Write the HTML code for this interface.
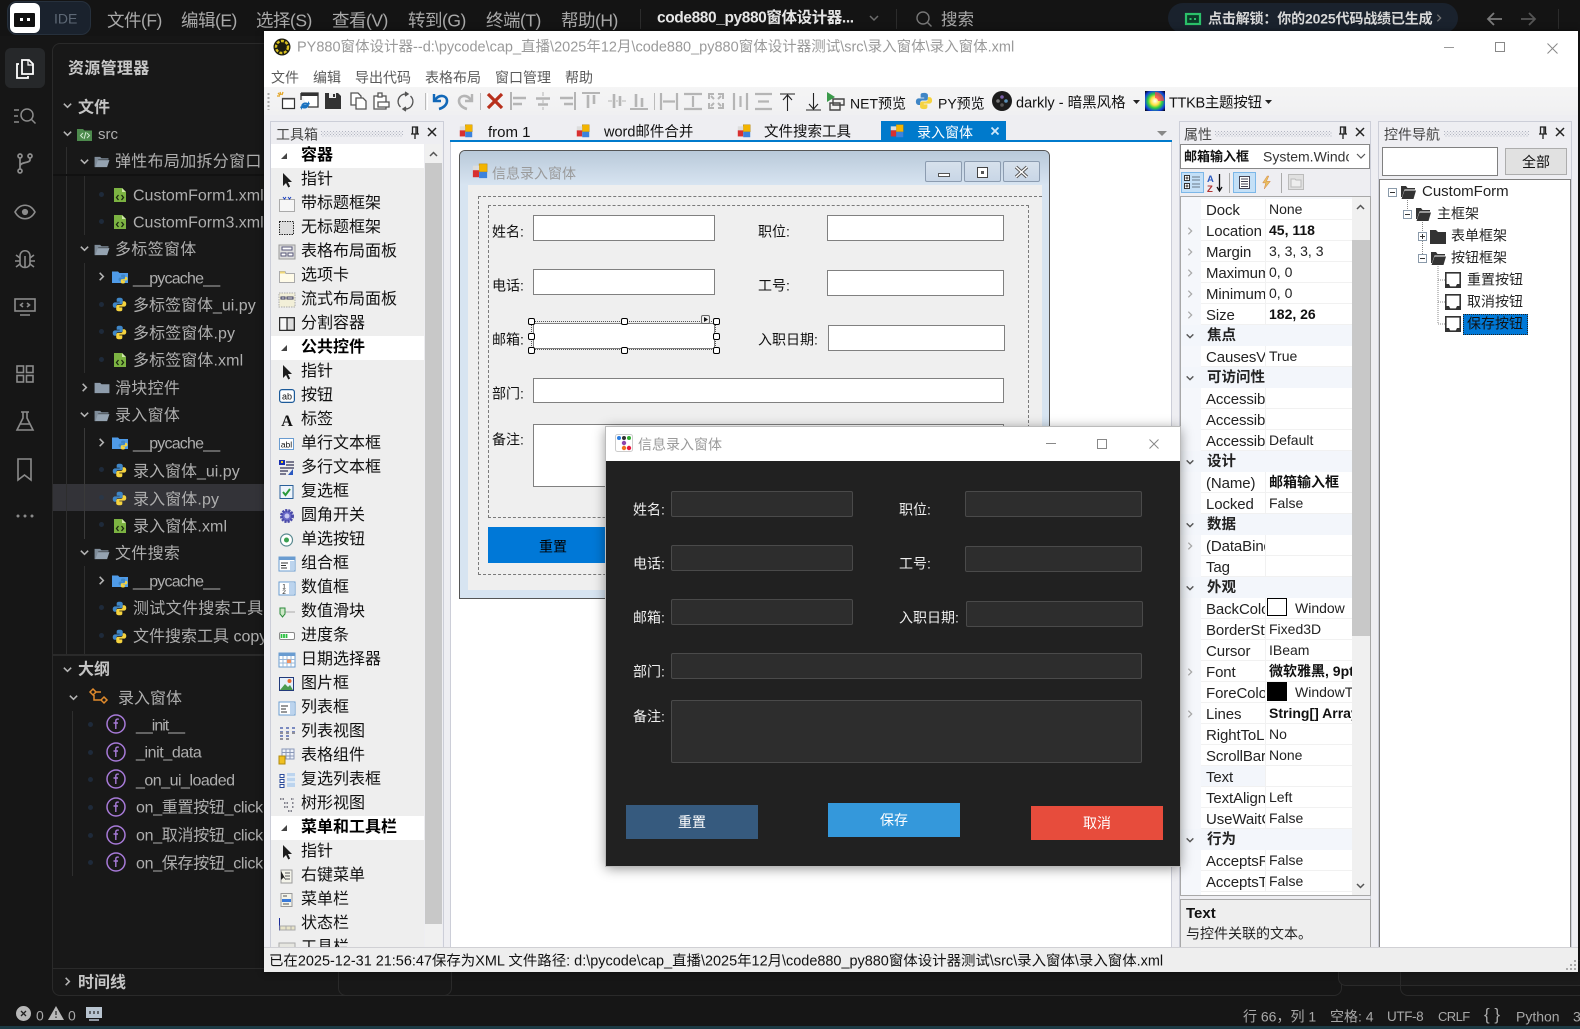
<!DOCTYPE html>
<html lang="zh"><head><meta charset="utf-8"><title>PY880窗体设计器</title>
<style>
html,body{margin:0;padding:0}
body{width:1580px;height:1029px;overflow:hidden;position:relative;background:#161616;font-family:"Liberation Sans","Noto Sans CJK SC",sans-serif}
.a{position:absolute}
.t{position:absolute;white-space:nowrap;line-height:1.2;transform:translateY(calc(-50% + 1px))}
svg{position:absolute;overflow:visible}
.m{font-size:17.500px;letter-spacing:-.5px;color:#a9a9a9;top:20px}
.f{font-size:16px;letter-spacing:.3px;color:#aeaeae}
.f.x{letter-spacing:0}
.f.y{letter-spacing:.1px}
.f.u{letter-spacing:-.8px}
.b{font-size:16px;font-weight:bold;color:#c4c4c4}
.mn{font-size:14px;color:#5a5a5a;top:77px}
.tbt{font-size:14.500px;color:#111;top:103px}
.tr{position:absolute;left:271px;width:153px;height:24px;background:#eee}
.tr.s{background:#fff}
.tr span{position:absolute;left:30px;top:0;line-height:23px;font-size:16px;color:#111;white-space:nowrap}
.tr.s span{font-weight:bold;color:#000}
.tr svg{left:8px;top:4px}
.tr.s svg{left:9px;top:8px}
.in{position:absolute;box-sizing:border-box;background:#fff;border:1px solid #808080}
.l{font-size:14px;color:#111;background:#efefef;padding-left:3px;margin-left:-3px}
.h{position:absolute;box-sizing:border-box;width:7px;height:7px;background:#fff;border:1px solid #000;border-radius:2px}
.r{position:absolute;left:1201px;width:151px;height:20px;background:#fff;border-bottom:1px solid #f1f1f1}
.r .n{position:absolute;left:5px;top:0;width:59px;overflow:hidden;font-size:15px;letter-spacing:-.1px;line-height:23px;color:#222;white-space:nowrap}
.r .v{position:absolute;left:64px;top:0;width:87px;height:21px;box-sizing:border-box;border-left:1px solid #f1f1f1;padding-left:3px;overflow:hidden;font-size:14px;line-height:20px;color:#222;white-space:nowrap}
.r .v.k{font-weight:bold;color:#111}
.sc{position:absolute;left:1181px;width:171px;height:21px;background:#f3f6fb;font-size:14.500px;font-weight:bold;line-height:23px;color:#222;text-indent:26px;overflow:hidden}
.ch{position:absolute;left:1185px;width:10px;height:10px}
.di{position:absolute;box-sizing:border-box;background:#2d2d2d;border:1px solid #4a4a4a;border-radius:2px}
.dl{font-size:14px;color:#eee}
.db{position:absolute;width:132px;height:34px;line-height:35px;text-align:center;color:#fff;font-size:14px}
.nt{font-size:15px;color:#222}
.st{font-size:14px;color:#a8a8a8;top:1016px}
</style></head><body>
<svg width="0" height="0" style="position:absolute"><defs>
<symbol id="py" viewBox="0 0 16 16"><path d="M8 .8C4.8.8 5 2.200 5 3v2h3.200v.7H3.300C1.800 5.700.8 6.900.8 8.600s1 2.900 2.300 2.900h1.500V9.600c0-1.100.9-2 2-2h3.100c1 0 1.800-.8 1.800-1.800V3C11.500 1.900 10.800.8 8 .8z" fill="#3f86c6"/><path d="M8 15.200c3.200 0 3-1.400 3-2.200v-2H7.800v-.7h4.900c1.500 0 2.500-1.200 2.500-2.900s-1-2.900-2.300-2.900h-1.500v1.900c0 1.100-.9 2-2 2H6.300c-1 0-1.800.8-1.800 1.800V13c0 1.100.7 2.200 3.500 2.200z" fill="#f5d33f"/></symbol>
<symbol id="xml" viewBox="0 0 12 16"><path d="M0 1h8l4 4v10H0z" fill="#7cb342"/><path d="M8 1v4h4z" fill="#cfe8a8"/><path d="M4.500 8L2.500 10.500 4.500 13M7.500 8l2 2.500-2 2.500" fill="none" stroke="#1c2a10" stroke-width="1.300"/></symbol>
<symbol id="fo" viewBox="0 0 16 14"><path d="M0 2h6l1.500 1.500H15V5H4L1.500 13H0z" fill="#7f8c99"/><path d="M3.500 5.500H16L13.500 13H1z" fill="#95a3b1"/></symbol>
<symbol id="fc" viewBox="0 0 16 14"><path d="M0 2h6l1.500 1.500H16V13H0z" fill="#8e9cab"/></symbol>
<symbol id="fb" viewBox="0 0 16 14"><path d="M0 1.500h6L7.500 3H16v10H0z" fill="#4f9be8"/><use href="#py" x="6" y="4" width="10" height="10"/></symbol>
<symbol id="cd" viewBox="0 0 12 12"><path d="M2 4l4 4 4-4" fill="none" stroke="#b4b4b4" stroke-width="1.700"/></symbol>
<symbol id="cr" viewBox="0 0 12 12"><path d="M4 2l4 4-4 4" fill="none" stroke="#b4b4b4" stroke-width="1.700"/></symbol>
<symbol id="ff" viewBox="0 0 20 20"><circle cx="10" cy="10" r="9" fill="none" stroke="#a77ad8" stroke-width="1.500"/><path d="M12.800 5.300c-1.500-.6-3-.1-3 1.700v8M7.500 9h4.500" fill="none" stroke="#a77ad8" stroke-width="1.400"/></symbol>
<symbol id="ptr" viewBox="0 0 16 16"><path d="M4 1v13l3-3 2.300 4.500 1.800-1-2.200-4.500H13z" fill="#1c1c1c"/></symbol>
<symbol id="tri" viewBox="0 0 8 8"><path d="M7 1v6H1z" fill="#444"/></symbol>
<symbol id="ic" viewBox="0 0 18 18"><rect x="1" y="8" width="7" height="8" fill="#d83030"/><rect x="8" y="1" width="9" height="9" fill="#f3b400" stroke="#b88a10" stroke-width=".6"/><rect x="8" y="10" width="9" height="7" fill="#3c82dc"/><rect x="1" y="3" width="7" height="5" fill="#ddd"/></symbol>
<symbol id="folder" viewBox="0 0 16 16"><path d="M1 2h5l1.500 2H15v1.500H4.500L2 13H1z" fill="#333"/><path d="M4.500 6.500H16L13.500 15H1.500z" fill="#333"/></symbol>
<symbol id="ctl" viewBox="0 0 16 16"><path d="M.8.800h14.400v14.400H.8z" fill="#fff" stroke="#333" stroke-width="1.600"/><path d="M1 12h3l1.500 3H1zM15 12h-3l-1.500 3H15z" fill="#333"/></symbol>
<symbol id="pin" viewBox="0 0 12 14"><path d="M3.500 1h5v7h-5zM2 8h8M6 8v5M7 1v7" fill="none" stroke="#222" stroke-width="1.300"/></symbol>
<symbol id="x" viewBox="0 0 10 10"><path d="M1 1l8 8M9 1l-8 8" stroke="#222" stroke-width="1.500"/></symbol>
<symbol id="exm" viewBox="0 0 9 9"><path d="M.5.500h8v8h-8z" fill="#fff" stroke="#8a9aaa"/><path d="M2 4.500h5" stroke="#333"/></symbol>
<symbol id="exp" viewBox="0 0 9 9"><path d="M.5.500h8v8h-8z" fill="#fff" stroke="#8a9aaa"/><path d="M2 4.500h5M4.500 2v5" stroke="#333"/></symbol>
<pattern id="dots" width="3" height="3" patternUnits="userSpaceOnUse"><rect width="1" height="1" fill="#b3b6c2"/><rect x="1.500" y="1.500" width="1" height="1" fill="#b3b6c2"/></pattern>
</defs></svg>

<!-- top bar -->
<div class="a" style="left:0;top:0;width:1580px;height:36px;background:#141414"></div>
<div class="a" style="left:7px;top:1px;width:84px;height:34px;box-sizing:border-box;background:#1a222d;border:1px solid #26303c;border-radius:10px"></div>
<div class="a" style="left:10px;top:3px;width:30px;height:30px;background:#fff;border-radius:6px"></div>
<div class="a" style="left:14px;top:13px;width:21px;height:14px;box-sizing:border-box;background:#111;border-radius:1px"></div>
<div class="a" style="left:20px;top:18px;width:3px;height:3px;background:#fff"></div><div class="a" style="left:27px;top:18px;width:3px;height:3px;background:#fff"></div>
<span class="t" style="left:54px;top:18px;font-size:14px;color:#5d6875">IDE</span>
<span class="t m" style="left:107px">文件(F)</span><span class="t m" style="left:181px">编辑(E)</span><span class="t m" style="left:256px">选择(S)</span><span class="t m" style="left:332px">查看(V)</span><span class="t m" style="left:408px">转到(G)</span><span class="t m" style="left:486px">终端(T)</span><span class="t m" style="left:561px">帮助(H)</span>
<div class="a" style="left:640px;top:9px;width:1px;height:20px;background:#2c2c2c"></div>
<span class="t" style="left:657px;top:18px;font-size:15.500px;letter-spacing:-.4px;font-weight:bold;color:#e6e6e6">code880_py880窗体设计器...</span>
<svg style="left:868px;top:12px" width="12" height="12" viewBox="0 0 12 12"><path d="M2 4l4 4 4-4" fill="none" stroke="#6c6c6c" stroke-width="1.500"/></svg>
<div class="a" style="left:896px;top:9px;width:1px;height:20px;background:#2c2c2c"></div>
<svg style="left:916px;top:11px" width="17" height="17" viewBox="0 0 17 17"><circle cx="7" cy="7" r="6" fill="none" stroke="#777" stroke-width="1.400"/><path d="M11.500 11.500l4 4" stroke="#777" stroke-width="1.400"/></svg>
<span class="t" style="left:941px;top:20px;font-size:16.500px;color:#a9a9a9">搜索</span>
<div class="a" style="left:1168px;top:3px;width:290px;height:30px;background:#1a222d;border-radius:15px"></div>
<svg style="left:1185px;top:13px" width="16" height="12"><rect x="1" y="1" width="14" height="10" fill="#0c3a28" stroke="#2bc06a" stroke-width="2.200"/><rect x="4.500" y="5" width="2" height="2" fill="#2bc06a"/><rect x="9" y="5" width="2" height="2" fill="#2bc06a"/></svg>
<span class="t" style="left:1208px;top:18px;font-size:14px;letter-spacing:-.15px;color:#d8d8d8;font-weight:bold">点击解锁：你的2025代码战绩已生成</span>
<svg style="left:1434px;top:13px" width="10" height="10" viewBox="0 0 12 12"><path d="M4 2l4 4-4 4" fill="none" stroke="#777" stroke-width="1.500"/></svg>
<svg style="left:1486px;top:11px" width="17" height="16" viewBox="0 0 17 16"><path d="M16 8H2M8 2L2 8l6 6" fill="none" stroke="#7b7b7b" stroke-width="1.800"/></svg>
<svg style="left:1520px;top:11px" width="17" height="16" viewBox="0 0 17 16"><path d="M1 8h14M9 2l6 6-6 6" fill="none" stroke="#555" stroke-width="1.800"/></svg>
<div class="a" style="left:1558px;top:9px;width:1px;height:20px;background:#2c2c2c"></div>

<!-- activity bar -->
<div class="a" style="left:5px;top:48px;width:40px;height:40px;background:#26282a;border-radius:6px"></div>
<svg style="left:15px;top:58px" width="20" height="22" viewBox="0 0 20 22" fill="none" stroke="#fff" stroke-width="1.800"><path d="M7 2h7l4 4v10H7z"/><path d="M4 6H2v14h11v-2"/><path d="M13 2v5h5" stroke-width="1.200"/></svg>
<svg style="left:14px;top:107px" width="23" height="18" viewBox="0 0 23 18" fill="none" stroke="#8b8b8b" stroke-width="1.500"><path d="M0 3h5M0 9h4M0 15h5"/><circle cx="13" cy="8" r="6"/><path d="M17.500 12.500l4 4"/></svg>
<svg style="left:17px;top:153px" width="16" height="21" viewBox="0 0 16 21" fill="none" stroke="#8b8b8b" stroke-width="1.700"><circle cx="3" cy="3" r="2"/><circle cx="13" cy="3" r="2"/><circle cx="3" cy="18" r="2"/><path d="M3 5v11M13 5v2c0 3-10 2-10 6"/></svg>
<svg style="left:14px;top:204px" width="22" height="16" viewBox="0 0 22 16" fill="none" stroke="#8b8b8b" stroke-width="1.600"><path d="M1 8c5-9 15-9 20 0-5 9-15 9-20 0z"/><circle cx="11" cy="8" r="2.300" fill="#8b8b8b"/></svg>
<svg style="left:15px;top:249px" width="20" height="20" viewBox="0 0 20 20" fill="none" stroke="#8b8b8b" stroke-width="1.600"><path d="M5 7c0-7 10-7 10 0v7c0 6-10 6-10 0z"/><path d="M10 7v12M1 6l4 3M19 6l-4 3M0 12h5M20 12h-5M1 18l4-3M19 18l-4-3"/></svg>
<svg style="left:14px;top:298px" width="22" height="18" viewBox="0 0 22 18" fill="none" stroke="#8b8b8b" stroke-width="1.600"><rect x="1" y="1" width="20" height="12"/><path d="M6 17h10M9 5L6.500 7 9 9M13 5l2.500 2L13 9"/></svg>
<svg style="left:16px;top:365px" width="18" height="18" viewBox="0 0 18 18" fill="none" stroke="#8b8b8b" stroke-width="1.600"><rect x="1" y="1" width="6.500" height="6.500"/><rect x="10.500" y="1" width="6.500" height="6.500"/><rect x="1" y="10.500" width="6.500" height="6.500"/><rect x="10.500" y="10.500" width="6.500" height="6.500"/></svg>
<svg style="left:16px;top:411px" width="18" height="20" viewBox="0 0 18 20" fill="none" stroke="#8b8b8b" stroke-width="1.600"><path d="M5 1h8M7 1v6L1 19h16L11 7V1M4 13h10"/></svg>
<svg style="left:17px;top:458px" width="15" height="23" viewBox="0 0 15 23" fill="none" stroke="#8b8b8b" stroke-width="1.600"><path d="M1 1h13v21l-6.500-5L1 22z"/></svg>
<svg style="left:16px;top:514px" width="18" height="4"><circle cx="2" cy="2" r="1.500" fill="#8b8b8b"/><circle cx="9" cy="2" r="1.500" fill="#8b8b8b"/><circle cx="16" cy="2" r="1.500" fill="#8b8b8b"/></svg>

<!-- side panel -->
<div class="a" style="left:52px;top:43px;width:400px;height:953px;box-sizing:border-box;background:#181818;border:1px solid #2a2a2a;border-radius:8px"></div>
<div class="a" style="left:53px;top:484px;width:212px;height:27px;background:#333338"></div>
<div class="a" style="left:66px;top:147px;width:1px;height:508px;background:#2e2e2e"></div>
<div class="a" style="left:84px;top:175px;width:1px;height:60px;background:#2e2e2e"></div>
<div class="a" style="left:84px;top:263px;width:1px;height:110px;background:#2e2e2e"></div>
<div class="a" style="left:84px;top:428px;width:1px;height:111px;background:#3a3a3a"></div>
<div class="a" style="left:84px;top:566px;width:1px;height:89px;background:#2e2e2e"></div>
<div class="a" style="left:53px;top:174px;width:212px;height:2px;background:#111"></div>
<span class="t" style="left:68px;top:68px;font-size:16px;font-weight:bold;letter-spacing:.3px;color:#c8c8c8">资源管理器</span>
<svg style="left:62px;top:100px" width="11" height="11"><use href="#cd" width="11" height="11"/></svg>
<span class="t b" style="left:78px;top:107px">文件</span>
<svg style="left:62px;top:128px" width="11" height="11"><use href="#cd" width="11" height="11"/></svg>
<svg style="left:77px;top:128px" width="16" height="14" viewBox="0 0 16 14"><path d="M0 1h6l1.500 1.500H15V13H0z" fill="#4d8a4d"/><path d="M6 5L3.500 7.500 6 10M10 5l2.500 2.500L10 10M9 4L7 11" fill="none" stroke="#cfe8cf" stroke-width="1"/></svg>
<span class="t" style="left:98px;top:134px;font-size:15px;color:#aeaeae">src</span>

<svg style="left:79px;top:156px" width="11" height="11"><use href="#cd" width="11" height="11"/></svg><svg style="left:94px;top:155px" width="16" height="13"><use href="#fo" width="16" height="13"/></svg><span class="t f" style="left:115px;top:161px">弹性布局加拆分窗口</span>
<div class="a" style="left:99px;top:192px;width:5px;height:5px;border-radius:3px;background:#1e2a3a"></div><svg style="left:114px;top:187px" width="12" height="16"><use href="#xml" width="12" height="16"/></svg><span class="t f x" style="left:133px;top:195px">CustomForm1.xml</span>
<div class="a" style="left:99px;top:219px;width:5px;height:5px;border-radius:3px;background:#1e2a3a"></div><svg style="left:114px;top:214px" width="12" height="16"><use href="#xml" width="12" height="16"/></svg><span class="t f x" style="left:133px;top:222px">CustomForm3.xml</span>
<svg style="left:79px;top:243px" width="11" height="11"><use href="#cd" width="11" height="11"/></svg><svg style="left:94px;top:243px" width="16" height="13"><use href="#fo" width="16" height="13"/></svg><span class="t f" style="left:115px;top:249px">多标签窗体</span>
<svg style="left:96px;top:271px" width="11" height="11"><use href="#cr" width="11" height="11"/></svg><svg style="left:112px;top:270px" width="16" height="14"><use href="#fb" width="16" height="14"/></svg><span class="t f u" style="left:133px;top:278px">__pycache__</span>
<div class="a" style="left:99px;top:302px;width:5px;height:5px;border-radius:3px;background:#1e2a3a"></div><svg style="left:112px;top:297px" width="15" height="15"><use href="#py" width="15" height="15"/></svg><span class="t f x" style="left:133px;top:305px">多标签窗体_ui.py</span>
<div class="a" style="left:99px;top:329px;width:5px;height:5px;border-radius:3px;background:#1e2a3a"></div><svg style="left:112px;top:325px" width="15" height="15"><use href="#py" width="15" height="15"/></svg><span class="t f y" style="left:133px;top:333px">多标签窗体.py</span>
<div class="a" style="left:99px;top:357px;width:5px;height:5px;border-radius:3px;background:#1e2a3a"></div><svg style="left:114px;top:352px" width="12" height="16"><use href="#xml" width="12" height="16"/></svg><span class="t f y" style="left:133px;top:360px">多标签窗体.xml</span>
<svg style="left:79px;top:382px" width="11" height="11"><use href="#cr" width="11" height="11"/></svg><svg style="left:94px;top:381px" width="16" height="13"><use href="#fc" width="16" height="13"/></svg><span class="t f" style="left:115px;top:388px">滑块控件</span>
<svg style="left:79px;top:409px" width="11" height="11"><use href="#cd" width="11" height="11"/></svg><svg style="left:94px;top:409px" width="16" height="13"><use href="#fo" width="16" height="13"/></svg><span class="t f" style="left:115px;top:415px">录入窗体</span>
<svg style="left:96px;top:437px" width="11" height="11"><use href="#cr" width="11" height="11"/></svg><svg style="left:112px;top:436px" width="16" height="14"><use href="#fb" width="16" height="14"/></svg><span class="t f u" style="left:133px;top:443px">__pycache__</span>
<div class="a" style="left:99px;top:467px;width:5px;height:5px;border-radius:3px;background:#1e2a3a"></div><svg style="left:112px;top:463px" width="15" height="15"><use href="#py" width="15" height="15"/></svg><span class="t f x" style="left:133px;top:471px">录入窗体_ui.py</span>
<div class="a" style="left:99px;top:495px;width:5px;height:5px;border-radius:3px;background:#2a3646"></div><svg style="left:112px;top:491px" width="15" height="15"><use href="#py" width="15" height="15"/></svg><span class="t f y" style="left:133px;top:499px">录入窗体.py</span>
<div class="a" style="left:99px;top:522px;width:5px;height:5px;border-radius:3px;background:#1e2a3a"></div><svg style="left:114px;top:518px" width="12" height="16"><use href="#xml" width="12" height="16"/></svg><span class="t f y" style="left:133px;top:526px">录入窗体.xml</span>
<svg style="left:79px;top:547px" width="11" height="11"><use href="#cd" width="11" height="11"/></svg><svg style="left:94px;top:547px" width="16" height="13"><use href="#fo" width="16" height="13"/></svg><span class="t f" style="left:115px;top:553px">文件搜索</span>
<svg style="left:96px;top:575px" width="11" height="11"><use href="#cr" width="11" height="11"/></svg><svg style="left:112px;top:574px" width="16" height="14"><use href="#fb" width="16" height="14"/></svg><span class="t f u" style="left:133px;top:581px">__pycache__</span>
<div class="a" style="left:99px;top:605px;width:5px;height:5px;border-radius:3px;background:#1e2a3a"></div><svg style="left:112px;top:601px" width="15" height="15"><use href="#py" width="15" height="15"/></svg><span class="t f" style="left:133px;top:608px">测试文件搜索工具</span>
<div class="a" style="left:99px;top:633px;width:5px;height:5px;border-radius:3px;background:#1e2a3a"></div><svg style="left:112px;top:629px" width="15" height="15"><use href="#py" width="15" height="15"/></svg><span class="t f x" style="left:133px;top:636px">文件搜索工具 copy</span>

<div class="a" style="left:53px;top:654px;width:212px;height:2px;background:#2a2a2a"></div>
<svg style="left:62px;top:664px" width="11" height="11"><use href="#cd" width="11" height="11"/></svg>
<span class="t b" style="left:78px;top:669px">大纲</span>
<svg style="left:68px;top:692px" width="11" height="11"><use href="#cd" width="11" height="11"/></svg>
<svg style="left:89px;top:688px" width="19" height="18" viewBox="0 0 19 18" fill="none" stroke="#e08a2c" stroke-width="1.500"><path d="M4 1l3 3-3 3-3-3zM7 4h5M5 7v5h8M15 9l3 3-3 3-3-3z"/></svg>
<span class="t" style="left:118px;top:698px;font-size:16px;color:#aeaeae">录入窗体</span>
<div class="a" style="left:72px;top:711px;width:1px;height:165px;background:#2e2e2e"></div>
<div class="a" style="left:88px;top:722px;width:5px;height:5px;border-radius:3px;background:#1e2a3a"></div><svg style="left:106px;top:714px" width="20" height="20"><use href="#ff" width="20" height="20"/></svg><span class="t f" style="left:136px;top:725px;letter-spacing:-1px">__init__</span>
<div class="a" style="left:88px;top:750px;width:5px;height:5px;border-radius:3px;background:#1e2a3a"></div><svg style="left:106px;top:742px" width="20" height="20"><use href="#ff" width="20" height="20"/></svg><span class="t f" style="left:136px;top:752px;letter-spacing:-.4px">_init_data</span>
<div class="a" style="left:88px;top:777px;width:5px;height:5px;border-radius:3px;background:#1e2a3a"></div><svg style="left:106px;top:769px" width="20" height="20"><use href="#ff" width="20" height="20"/></svg><span class="t f" style="left:136px;top:780px;letter-spacing:-.5px">_on_ui_loaded</span>
<div class="a" style="left:88px;top:805px;width:5px;height:5px;border-radius:3px;background:#1e2a3a"></div><svg style="left:106px;top:797px" width="20" height="20"><use href="#ff" width="20" height="20"/></svg><span class="t f" style="left:136px;top:807px;letter-spacing:-.3px">on_重置按钮_click</span>
<div class="a" style="left:88px;top:833px;width:5px;height:5px;border-radius:3px;background:#1e2a3a"></div><svg style="left:106px;top:825px" width="20" height="20"><use href="#ff" width="20" height="20"/></svg><span class="t f" style="left:136px;top:835px;letter-spacing:-.3px">on_取消按钮_click</span>
<div class="a" style="left:88px;top:860px;width:5px;height:5px;border-radius:3px;background:#1e2a3a"></div><svg style="left:106px;top:852px" width="20" height="20"><use href="#ff" width="20" height="20"/></svg><span class="t f" style="left:136px;top:863px;letter-spacing:-.3px">on_保存按钮_click</span>
<div class="a" style="left:53px;top:968px;width:212px;height:1px;background:#2a2a2a"></div>
<svg style="left:62px;top:976px" width="11" height="11"><use href="#cr" width="11" height="11"/></svg>
<span class="t b" style="left:78px;top:982px">时间线</span>

<!-- editor remnants below window -->
<div class="a" style="left:338px;top:960px;width:1004px;height:36px;box-sizing:border-box;border:1px solid #2a2a2a;border-radius:8px"></div>
<div class="a" style="left:1338px;top:960px;width:242px;height:26px;box-sizing:border-box;background:#1a1a1a;border:1px solid #2a2a2a;border-right:0;border-radius:0 0 0 8px"></div>
<div class="a" style="left:1400px;top:960px;width:180px;height:36px;box-sizing:border-box;border-bottom:1px solid #2a2a2a;border-left:1px solid #2a2a2a;border-radius:0 0 0 8px"></div>

<!-- status bar -->
<svg style="left:16px;top:1006px" width="15" height="15" viewBox="0 0 15 15"><circle cx="7.500" cy="7.500" r="7.500" fill="#b8b8b8"/><path d="M5 5l5 5M10 5l-5 5" stroke="#222" stroke-width="1.300"/></svg>
<span class="t" style="left:36px;top:1015px;font-size:14px;color:#a8a8a8">0</span>
<svg style="left:48px;top:1006px" width="16" height="14" viewBox="0 0 16 14"><path d="M8 0l8 14H0z" fill="#b8b8b8"/><path d="M8 5v4M8 10.500v1.500" stroke="#222" stroke-width="1.200"/></svg>
<span class="t" style="left:68px;top:1015px;font-size:14px;color:#a8a8a8">0</span>
<svg style="left:86px;top:1007px" width="16" height="14" viewBox="0 0 16 14"><rect width="16" height="11" fill="#b8c4d0"/><path d="M4 4v3M8 4v3M12 4v3" stroke="#222" stroke-width="1.200"/><path d="M3 13h10" stroke="#b8c4d0" stroke-width="1.500"/></svg>
<span class="t st" style="left:1243px">行 66，列 1</span>
<span class="t st" style="left:1330px">空格: 4</span>
<span class="t st" style="left:1387px;font-size:13.500px;letter-spacing:-.4px">UTF-8</span>
<span class="t st" style="left:1438px;font-size:13px;letter-spacing:-.6px">CRLF</span>
<span class="t" style="left:1484px;top:1014px;font-size:17px;color:#a8a8a8">{ }</span>
<span class="t st" style="left:1516px">Python</span>
<span class="t st" style="left:1573px">3</span>
<div class="a" style="left:0;top:1026px;width:1580px;height:3px;background:#1c3a44"></div>

<!-- MAIN WINDOW -->
<div class="a" style="left:264px;top:31px;width:1314px;height:941px;background:#eeeef2;box-shadow:0 0 6px rgba(0,0,0,.5)"></div>
<div class="a" style="left:264px;top:31px;width:1314px;height:56px;background:#fff"></div>
<svg style="left:273px;top:38px" width="18" height="18" viewBox="0 0 18 18"><circle cx="9" cy="9" r="8.500" fill="#1c1c10"/><circle cx="9" cy="9" r="6" fill="none" stroke="#d8c020" stroke-width="2.400" stroke-dasharray="3 1.500"/></svg>
<span class="t" style="left:297px;top:47px;font-size:14.500px;color:#9a9a9a">PY880窗体设计器--d:\pycode\cap_直播\2025年12月\code880_py880窗体设计器测试\src\录入窗体\录入窗体.xml</span>
<div class="a" style="left:1444px;top:47px;width:10px;height:1px;background:#999"></div>
<div class="a" style="left:1495px;top:42px;width:10px;height:10px;box-sizing:border-box;border:1px solid #888"></div>
<svg style="left:1547px;top:43px" width="11" height="11"><path d="M.5.500l10 10M10.500.500l-10 10" stroke="#888"/></svg>
<span class="t mn" style="left:271px">文件</span><span class="t mn" style="left:313px">编辑</span><span class="t mn" style="left:355px">导出代码</span><span class="t mn" style="left:425px">表格布局</span><span class="t mn" style="left:495px">窗口管理</span><span class="t mn" style="left:565px">帮助</span>

<!-- toolbar -->
<div class="a" style="left:264px;top:87px;width:1314px;height:28px;background:linear-gradient(#f5f5f5,#f0f0f2)"></div>
<svg style="left:267px;top:93px" width="3" height="17"><path d="M1.500 0v17" stroke="#aaa" stroke-width="2" stroke-dasharray="2 2"/></svg>
<svg style="left:277px;top:92px" width="18" height="17" viewBox="0 0 18 17"><path d="M5.500 6.500h12v10h-12z" fill="#fff" stroke="#333" stroke-width="1.200"/><path d="M5 6h13v1.500H5z" fill="#444"/><path d="M3 0l1 3M0 4h3M6 0L5 3M1 1l2 2" stroke="#e2a528" stroke-width="1.300"/></svg>
<svg style="left:300px;top:92px" width="19" height="18" viewBox="0 0 19 18"><path d="M1 1h17v14H8" fill="#fff" stroke="#333" stroke-width="1.300"/><path d="M1 1h17v3H1z" fill="#333"/><path d="M1 1v7" stroke="#333" stroke-width="1.300"/><path d="M1 14c1-4 5-4 7-3l0-2 2 3-3 2v-1c-2-1-4 0-6 1zM9 13c-1 4-5 4-7 3v2l-2-3 3-2" fill="#1a72c0"/></svg>
<svg style="left:325px;top:93px" width="16" height="16" viewBox="0 0 16 16"><path d="M0 0h13l3 3v13H0z" fill="#333"/><path d="M4 0h7v5H4z" fill="#eee"/><path d="M8 1h2v3H8z" fill="#333"/></svg>
<svg style="left:350px;top:92px" width="17" height="18" viewBox="0 0 17 18" fill="#fff" stroke="#555" stroke-width="1.300"><path d="M1 1h7l3 3v9H1z"/><path d="M6 6h7l3 3v8H6z"/></svg>
<svg style="left:373px;top:92px" width="17" height="18" viewBox="0 0 17 18" fill="#fff" stroke="#555" stroke-width="1.300"><path d="M1 4h12v13H1z"/><path d="M5 1h4v4H5z"/><path d="M5 10h11v5H5z"/></svg>
<svg style="left:396px;top:92px" width="19" height="19" viewBox="0 0 19 19" fill="none" stroke="#555" stroke-width="1.400"><path d="M9.500 2a7.500 7.500 0 0 0-5 13M9.500 17a7.500 7.500 0 0 0 5-13"/><path d="M9 0l3 2-3 2M10 15l-3 2 3 2" fill="#555"/></svg>
<div class="a" style="left:425px;top:93px;width:1px;height:17px;background:#bbb"></div><div class="a" style="left:427px;top:93px;width:1px;height:17px;background:#fff"></div>
<svg style="left:432px;top:92px" width="17" height="18" viewBox="0 0 17 18" fill="none"><path d="M2 2v7h7" stroke="#1268b8" stroke-width="2.400"/><path d="M3 8c4-6 12-5 12 1 0 4-4 7-8 8" stroke="#1268b8" stroke-width="2.600"/></svg>
<svg style="left:457px;top:92px" width="17" height="18" viewBox="0 0 17 18" fill="none"><path d="M15 2v7H8" stroke="#b5b5b5" stroke-width="2.400"/><path d="M14 8C10 2 2 3 2 9c0 4 4 7 8 8" stroke="#b5b5b5" stroke-width="2.600"/></svg>
<div class="a" style="left:480px;top:93px;width:1px;height:17px;background:#bbb"></div>
<svg style="left:487px;top:93px" width="16" height="16"><path d="M1 1l14 14M15 1L1 15" stroke="#b8301c" stroke-width="3.200"/></svg>
<svg style="left:510px;top:92px" width="18" height="18" fill="none" stroke="#b5b5b5" stroke-width="2"><path d="M1 0v18"/><path d="M3 6h13M3 12h9" stroke-width="2.600"/></svg>
<svg style="left:535px;top:92px" width="16" height="18" fill="none" stroke="#b5b5b5"><path d="M8 0v4M8 8v3M8 15v3"/><path d="M1 6.500h14M3 12.500h10" stroke-width="2.600"/></svg>
<svg style="left:558px;top:92px" width="18" height="18" fill="none" stroke="#b5b5b5" stroke-width="2"><path d="M17 0v18"/><path d="M2 6h13M6 12h9" stroke-width="2.600"/></svg>
<svg style="left:582px;top:92px" width="18" height="18" fill="none" stroke="#b5b5b5" stroke-width="2"><path d="M0 1h18"/><path d="M6 3v13M12 3v9" stroke-width="2.600"/></svg>
<svg style="left:608px;top:92px" width="18" height="18" fill="none" stroke="#b5b5b5"><path d="M0 9h4M8 9h2M14 9h4"/><path d="M6 2v14M12 4v10" stroke-width="2.600"/></svg>
<svg style="left:630px;top:92px" width="18" height="18" fill="none" stroke="#b5b5b5" stroke-width="2"><path d="M0 17h18"/><path d="M6 2v13M12 6v9" stroke-width="2.600"/></svg>
<div class="a" style="left:654px;top:93px;width:1px;height:17px;background:#bbb"></div>
<svg style="left:660px;top:93px" width="18" height="17" fill="none" stroke="#b5b5b5" stroke-width="2.200"><path d="M1 0v17M17 0v17M3 8.500h12"/></svg>
<svg style="left:684px;top:93px" width="18" height="17" fill="none" stroke="#b5b5b5" stroke-width="2.200"><path d="M0 1h18M0 16h18M9 3v11"/></svg>
<svg style="left:708px;top:93px" width="16" height="16" fill="none" stroke="#b5b5b5" stroke-width="2"><path d="M1 6V1h5M15 6V1h-5M1 10v5h5M15 10v5h-5M3 3l3 3M13 3l-3 3M3 13l3-3M13 13l-3-3"/></svg>
<svg style="left:733px;top:93px" width="15" height="17" fill="none" stroke="#b5b5b5" stroke-width="2.200"><path d="M1 0v17M14 0v17M7.500 3v11"/></svg>
<svg style="left:755px;top:93px" width="17" height="17" fill="none" stroke="#b5b5b5" stroke-width="2.200"><path d="M0 1h17M3 8.500h11M0 16h17"/></svg>
<svg style="left:780px;top:93px" width="15" height="18" fill="none" stroke="#222" stroke-width="1.100"><path d="M0 1h15M7.500 2v16M3 7l4.500-5L12 7"/></svg>
<svg style="left:806px;top:93px" width="15" height="18" fill="none" stroke="#222" stroke-width="1.100"><path d="M0 17h15M7.500 0v16M3 11l4.500 5 4.500-5"/></svg>
<svg style="left:827px;top:92px" width="18" height="19" viewBox="0 0 18 19"><path d="M0 0l8 5-8 5z" fill="#3a9a4a"/><path d="M6 7h11v6H6zM3 11h10v7H3z" fill="#f0f0f0" stroke="#444" stroke-width="1.400"/></svg>
<span class="t tbt" style="left:850px;font-size:14px">NET预览</span>
<svg style="left:915px;top:92px" width="18" height="18"><use href="#py" width="18" height="18"/></svg>
<span class="t tbt" style="left:938px;font-size:14px">PY预览</span>
<svg style="left:992px;top:91px" width="20" height="20" viewBox="0 0 20 20"><circle cx="10" cy="10" r="10" fill="#1c1c1c"/><circle cx="10" cy="6" r="1.800" fill="#7a5ea8"/><circle cx="6" cy="10" r="1.800" fill="#777"/><circle cx="14" cy="10" r="1.800" fill="#5a90b8"/><circle cx="10" cy="14" r="1.800" fill="#555"/></svg>
<span class="t tbt" style="left:1016px">darkly - 暗黑风格</span>
<svg style="left:1133px;top:100px" width="7" height="4"><path d="M0 0h7L3.500 4z" fill="#222"/></svg>
<svg style="left:1145px;top:91px" width="20" height="20"><defs><radialGradient id="rb" cx=".5" cy=".5" r=".7"><stop offset="0" stop-color="#fff"/><stop offset=".3" stop-color="#ffe040"/><stop offset=".5" stop-color="#30d040"/><stop offset=".75" stop-color="#1040e0"/><stop offset="1" stop-color="#000"/></radialGradient></defs><rect width="20" height="20" fill="url(#rb)"/><path d="M10 1a9 9 0 0 1 9 9h-6a3 3 0 0 0-3-3z" fill="#ff3060" opacity=".7"/></svg>
<span class="t tbt" style="left:1169px;letter-spacing:-.3px">TTKB主题按钮</span>
<svg style="left:1265px;top:100px" width="7" height="4"><path d="M0 0h7L3.500 4z" fill="#222"/></svg>

<!-- toolbox -->
<div class="a" style="left:270px;top:121px;width:174px;height:826px;box-sizing:border-box;background:#eeeef2;border:1px solid #ccced8;border-bottom:0"></div>
<span class="t" style="left:276px;top:134px;font-size:14px;color:#444">工具箱</span>
<svg style="left:321px;top:131px" width="82" height="6"><rect width="82" height="6" fill="url(#dots)"/></svg>
<svg style="left:409px;top:126px" width="12" height="14"><use href="#pin" width="12" height="14"/></svg>
<svg style="left:427px;top:127px" width="10" height="10"><use href="#x" width="10" height="10"/></svg>
<div class="a" style="left:425px;top:144px;width:17px;height:803px;background:#f0f0f0"></div>
<div class="a" style="left:425px;top:163px;width:17px;height:761px;background:#c8c8c8"></div>
<svg style="left:429px;top:151px" width="9" height="6"><path d="M1 5l3.500-3.500L8 5" fill="none" stroke="#555" stroke-width="1.500"/></svg>

<div class="tr s" style="top:144px"><svg width="8" height="8"><use href="#tri" width="8" height="8"/></svg><span>容器</span></div>
<div class="tr" style="top:168px"><svg width="16" height="16"><use href="#ptr" width="16" height="16"/></svg><span>指针</span></div>
<div class="tr" style="top:192px"><svg width="16" height="16" viewBox="0 0 16 16"><path d="M.5 3.500h15v12H.5z" fill="#f6f6f6" stroke="#aaa"/><path d="M4 1l1.500 2L7 1M9 1l1.500 2L12 1" fill="none" stroke="#1a3fc0"/></svg><span>带标题框架</span></div>
<div class="tr" style="top:216px"><svg width="16" height="16" viewBox="0 0 16 16"><rect x=".5" y="1.500" width="14" height="13" fill="#ddd" stroke="#222" stroke-dasharray="1.500 1"/></svg><span>无标题框架</span></div>
<div class="tr" style="top:240px"><svg width="16" height="16" viewBox="0 0 16 16"><rect y="1" width="16" height="14" fill="#ddd" stroke="#999"/><rect x="3" y="3" width="10" height="3" fill="#fff" stroke="#557"/><rect x="2" y="9" width="5" height="3" fill="#fff" stroke="#557"/><rect x="9" y="9" width="5" height="3" fill="#fff" stroke="#557"/></svg><span>表格布局面板</span></div>
<div class="tr" style="top:264px"><svg width="16" height="16" viewBox="0 0 16 16"><path d="M.5 3.500v11h15v-9H7L6 3.500z" fill="#fffbe8" stroke="#aaa"/><path d="M1 3.500h5v2H1z" fill="#f0d878"/></svg><span>选项卡</span></div>
<div class="tr" style="top:288px"><svg width="16" height="16" viewBox="0 0 16 16"><rect y="1" width="16" height="14" fill="#f2efd8" stroke="#aaa" stroke-dasharray="1.500 1"/><path d="M2 5h4v2H2zM8 5h6v2H8z" fill="#fff" stroke="#335"/></svg><span>流式布局面板</span></div>
<div class="tr" style="top:312px"><svg width="16" height="16" viewBox="0 0 16 16"><rect x=".7" y="1.700" width="14.600" height="12.600" fill="#ddd" stroke="#222" stroke-width="1.300"/><path d="M8 2v12" stroke="#222" stroke-width="1.300"/><rect x="1.300" y="2.300" width="6" height="11.400" fill="#f6f6f6"/></svg><span>分割容器</span></div>
<div class="tr s" style="top:336px"><svg width="8" height="8"><use href="#tri" width="8" height="8"/></svg><span>公共控件</span></div>
<div class="tr" style="top:360px"><svg width="16" height="16"><use href="#ptr" width="16" height="16"/></svg><span>指针</span></div>
<div class="tr" style="top:384px"><svg width="16" height="16" viewBox="0 0 16 16"><rect x=".6" y="1.600" width="14.800" height="12.800" rx="2.500" fill="#fff" stroke="#1c5a99" stroke-width="1.200"/><text x="8" y="11.500" text-anchor="middle" font-size="9" font-family="Liberation Sans" fill="#111">ab</text></svg><span>按钮</span></div>
<div class="tr" style="top:408px"><svg width="16" height="16" viewBox="0 0 16 16"><text x="8" y="14" text-anchor="middle" font-size="16" font-weight="bold" font-family="Liberation Serif" fill="#111">A</text></svg><span>标签</span></div>
<div class="tr" style="top:432px"><svg width="16" height="16" viewBox="0 0 16 16"><rect x=".5" y="2.500" width="14" height="11" fill="#fff" stroke="#6a9cd0"/><text x="7.500" y="11.500" text-anchor="middle" font-size="8.500" font-family="Liberation Sans" fill="#111">abl</text></svg><span>单行文本框</span></div>
<div class="tr" style="top:456px"><svg width="16" height="16" viewBox="0 0 16 16"><rect width="6" height="5" fill="#1a2fb0"/><rect x="2" y="1" width="2" height="2" fill="#f0d020"/><path d="M7 2h8M7 5h8M1 8h14M1 11h8M1 14h6" stroke="#335" stroke-width="1.200"/><path d="M9 15l5-6v6z" fill="#2a58c0"/></svg><span>多行文本框</span></div>
<div class="tr" style="top:480px"><svg width="16" height="16" viewBox="0 0 16 16"><rect x="1" y="1.500" width="13" height="13" fill="#eef4fb" stroke="#2a6099"/><path d="M4 8l2.500 3L11 5" fill="none" stroke="#2a9a3a" stroke-width="2"/></svg><span>复选框</span></div>
<div class="tr" style="top:504px"><svg width="16" height="16" viewBox="0 0 16 16"><circle cx="8" cy="8" r="5.500" fill="#6a6ac8" stroke="#4a4aa8" stroke-width="3" stroke-dasharray="2 1"/><circle cx="8" cy="8" r="2.500" fill="#c8c8f0"/></svg><span>圆角开关</span></div>
<div class="tr" style="top:528px"><svg width="16" height="16" viewBox="0 0 16 16"><circle cx="7.500" cy="8" r="6" fill="#fff" stroke="#5a8a90" stroke-width="1.200"/><circle cx="7.500" cy="8" r="2.500" fill="#3aa050"/></svg><span>单选按钮</span></div>
<div class="tr" style="top:552px"><svg width="16" height="16" viewBox="0 0 16 16"><rect y="1" width="16" height="14" fill="#fff" stroke="#6a9cd0"/><path d="M0 1h16v3H0z" fill="#6a9cd0"/><path d="M2 7h7M2 9.500h5M2 12h6" stroke="#333"/><rect x="11" y="5" width="4" height="9" fill="#bcd4ee"/></svg><span>组合框</span></div>
<div class="tr" style="top:576px"><svg width="16" height="16" viewBox="0 0 16 16"><rect y="2" width="16" height="13" fill="#fff" stroke="#6a9cd0"/><rect x="10" y="3" width="5" height="11" fill="#bcd4ee"/><text x="5" y="8.500" text-anchor="middle" font-size="6.500" font-family="Liberation Sans" fill="#111">1</text><text x="5" y="14" text-anchor="middle" font-size="6.500" font-family="Liberation Sans" fill="#111">2</text></svg><span>数值框</span></div>
<div class="tr" style="top:600px"><svg width="16" height="16" viewBox="0 0 16 16"><path d="M6 8h10" stroke="#aaa"/><path d="M1 4h5v6l-2.500 3L1 10z" fill="#cfe8c8" stroke="#2a8a3a"/></svg><span>数值滑块</span></div>
<div class="tr" style="top:624px"><svg width="16" height="16" viewBox="0 0 16 16"><rect x=".5" y="4.500" width="15" height="7" rx="1.500" fill="#fff" stroke="#888"/><path d="M2.500 6v4M5 6v4M7.500 6v4" stroke="#2ac040" stroke-width="1.800"/></svg><span>进度条</span></div>
<div class="tr" style="top:648px"><svg width="16" height="16" viewBox="0 0 16 16"><rect y="1" width="16" height="14" fill="#fff" stroke="#6a9cd0"/><path d="M0 1h16v3H0z" fill="#6a9cd0"/><path d="M4 4v11M8 4v11M12 4v11M0 7.500h16M0 11h16" stroke="#9ab8d8"/><rect x="8" y="7.500" width="4" height="3.500" fill="#f09060"/></svg><span>日期选择器</span></div>
<div class="tr" style="top:672px"><svg width="16" height="16" viewBox="0 0 16 16"><rect x=".5" y="1.500" width="14" height="13" fill="#e6f0fa" stroke="#223a7a"/><path d="M1 14l5-6 3 3 2-2 3 5z" fill="#4a9a50"/><circle cx="10.500" cy="5" r="2" fill="#e86a30"/></svg><span>图片框</span></div>
<div class="tr" style="top:696px"><svg width="16" height="16" viewBox="0 0 16 16"><rect y="2" width="16" height="13" fill="#fff" stroke="#6a9cd0"/><path d="M2 6h7M2 9h5M2 12h6" stroke="#333"/><rect x="11" y="3" width="4" height="11" fill="#bcd4ee"/></svg><span>列表框</span></div>
<div class="tr" style="top:720px"><svg width="16" height="16" viewBox="0 0 16 16"><path d="M1 3h3v2H1zM7 3h3v2H7zM13 3h3v2h-3zM1 7h3v1H1zM7 7h3v1H7zM13 7h3v1h-3zM1 11h3v2H1zM7 11h3v2H7z" fill="#7a8ac0"/><path d="M1 15h3M7 15h3M1 9h3M7 9h3M13 9h3" stroke="#334"/></svg><span>列表视图</span></div>
<div class="tr" style="top:744px"><svg width="16" height="16" viewBox="0 0 16 16"><rect x="3" y="1" width="12" height="10" fill="#eef2fa" stroke="#8a98b8"/><path d="M7 1v10M11 1v10M3 4.500h12M3 8h12" stroke="#8a98b8"/><rect x="0" y="8" width="6" height="8" fill="#f0c020" stroke="#b08a10"/></svg><span>表格组件</span></div>
<div class="tr" style="top:768px"><svg width="16" height="16" viewBox="0 0 16 16"><path d="M1 2.500h4v3H1zM1 7.500h4v3H1zM1 12.500h4v3H1z" fill="#fff" stroke="#2a4a9a"/><rect x="8" y="1" width="8" height="14" fill="#bcd4ee"/><path d="M8 5h8M8 10h8" stroke="#fff"/></svg><span>复选列表框</span></div>
<div class="tr" style="top:792px"><svg width="16" height="16" viewBox="0 0 16 16"><path d="M1 3h5M5 7h5M5 11h5M9 15h5M12 3h3M13 7h2M13 11h2" stroke="#445" stroke-width="1.200" stroke-dasharray="1.500 1"/></svg><span>树形视图</span></div>
<div class="tr s" style="top:816px"><svg width="8" height="8"><use href="#tri" width="8" height="8"/></svg><span>菜单和工具栏</span></div>
<div class="tr" style="top:840px"><svg width="16" height="16"><use href="#ptr" width="16" height="16"/></svg><span>指针</span></div>
<div class="tr" style="top:864px"><svg width="16" height="16" viewBox="0 0 16 16"><rect x="2" y="2" width="11" height="13" fill="#f4f4ea" stroke="#999"/><path d="M6 5h5M6 8h5M6 11h5" stroke="#555"/><path d="M2 3v9l2.500-2.500L7 12z" fill="#222"/></svg><span>右键菜单</span></div>
<div class="tr" style="top:888px"><svg width="16" height="16" viewBox="0 0 16 16"><rect x="2" y="1.500" width="11" height="13" fill="#f4f4ea" stroke="#999"/><path d="M4 4h4M4 12h6" stroke="#555"/><rect x="3" y="7" width="9" height="3" fill="#3a7ad8"/></svg><span>菜单栏</span></div>
<div class="tr" style="top:912px"><svg width="16" height="16" viewBox="0 0 16 16"><path d="M.5 2v12h15" fill="none" stroke="#1a2a9a"/><rect x="1" y="10" width="15" height="4" fill="#e8e4c8" stroke="#aaa"/><path d="M7 10v4M12 10v4" stroke="#aaa"/></svg><span>状态栏</span></div>
<div class="tr" style="top:936px"><svg width="16" height="16" viewBox="0 0 16 16"><rect y="3" width="16" height="10" fill="#e6e6e0" stroke="#aaa"/></svg><span>工具栏</span></div>

<!-- doc tabs -->
<div class="a" style="left:450px;top:140px;width:722px;height:2px;background:#007acc"></div>
<div class="a" style="left:450px;top:142px;width:722px;height:805px;background:#fff;box-sizing:border-box;border-left:1px solid #ccced8;border-right:1px solid #ccced8"></div>
<svg style="left:459px;top:124px" width="14" height="14"><use href="#ic" width="14" height="14"/></svg><span class="t" style="left:488px;top:132px;font-size:15px;color:#111">from 1</span>
<svg style="left:576px;top:124px" width="14" height="14"><use href="#ic" width="14" height="14"/></svg><span class="t" style="left:604px;top:132px;font-size:14.500px;color:#111">word邮件合并</span>
<svg style="left:737px;top:124px" width="14" height="14"><use href="#ic" width="14" height="14"/></svg><span class="t" style="left:764px;top:132px;font-size:14.500px;color:#111">文件搜索工具</span>
<div class="a" style="left:881px;top:121px;width:125px;height:20px;background:#007acc"></div>
<svg style="left:890px;top:124px" width="14" height="14"><use href="#ic" width="14" height="14"/></svg><span class="t" style="left:917px;top:132px;font-size:14px;color:#fff">录入窗体</span>
<svg style="left:991px;top:127px" width="8" height="8"><path d="M.5.500l7 7M7.500.500l-7 7" stroke="#cfe8fa" stroke-width="1.800"/></svg>
<svg style="left:1157px;top:131px" width="10" height="5"><path d="M0 0h10L5 5z" fill="#888"/></svg>

<!-- designer form -->
<div class="a" style="left:459px;top:150px;width:591px;height:449px;box-sizing:border-box;background:#d7e4f1;border:1px solid #555;border-radius:6px 6px 0 0"></div>
<div class="a" style="left:460px;top:151px;width:589px;height:34px;background:linear-gradient(#b9c9d9,#d7e4f1);border-radius:5px 5px 0 0"></div>
<svg style="left:472px;top:163px" width="16" height="16"><use href="#ic" width="16" height="16"/></svg>
<span class="t" style="left:492px;top:173px;font-size:14px;color:#9a9a9a">信息录入窗体</span>
<div class="a" style="left:925px;top:161px;width:37px;height:21px;box-sizing:border-box;border:1px solid #8c9cb0;border-radius:2px;background:linear-gradient(#d7e1ec,#c8d6e6)"></div><div class="a" style="left:938px;top:173px;width:12px;height:4px;box-sizing:border-box;background:#fff;border:1px solid #555"></div>
<div class="a" style="left:964px;top:161px;width:37px;height:21px;box-sizing:border-box;border:1px solid #8c9cb0;border-radius:2px;background:linear-gradient(#d7e1ec,#c8d6e6)"></div><div class="a" style="left:977px;top:167px;width:11px;height:11px;box-sizing:border-box;background:#fff;border:1px solid #444"></div><div class="a" style="left:981px;top:171px;width:3px;height:3px;background:#555"></div>
<div class="a" style="left:1003px;top:161px;width:37px;height:21px;box-sizing:border-box;border:1px solid #8c9cb0;border-radius:2px;background:linear-gradient(#d7e1ec,#c8d6e6)"></div><svg style="left:1015px;top:166px" width="13" height="12"><path d="M1 1l11 10M12 1L1 11" stroke="#555" stroke-width="3.400"/><path d="M1 1l11 10M12 1L1 11" stroke="#fff" stroke-width="1.400"/></svg>
<div class="a" style="left:468px;top:185px;width:574px;height:405px;background:#efefef"></div>
<div class="a" style="left:478px;top:196px;width:564px;height:379px;box-sizing:border-box;border:1px dashed #7a7a7a;border-right:0"></div>
<div class="a" style="left:488px;top:205px;width:541px;height:313px;box-sizing:border-box;border:1px dashed #7a7a7a"></div>

<div class="in" style="left:533px;top:215px;width:182px;height:26px"></div>
<div class="in" style="left:827px;top:215px;width:177px;height:26px"></div>
<div class="in" style="left:533px;top:269px;width:182px;height:26px"></div>
<div class="in" style="left:827px;top:270px;width:177px;height:26px"></div>
<div class="in" style="left:533px;top:323px;width:182px;height:26px"></div>
<div class="in" style="left:828px;top:325px;width:177px;height:26px"></div>
<div class="in" style="left:533px;top:378px;width:471px;height:25px"></div>
<div class="in" style="left:533px;top:424px;width:471px;height:63px"></div>
<span class="t l" style="left:492px;top:231px">姓名:</span><span class="t l" style="left:492px;top:285px">电话:</span><span class="t l" style="left:492px;top:339px">邮箱:</span><span class="t l" style="left:492px;top:393px">部门:</span><span class="t l" style="left:492px;top:439px">备注:</span>
<span class="t" style="left:758px;top:231px;font-size:14px;color:#111">职位:</span><span class="t" style="left:758px;top:285px;font-size:14px;color:#111">工号:</span><span class="t" style="left:758px;top:339px;font-size:14px;color:#111">入职日期:</span>
<div class="a" style="left:531px;top:321px;width:185px;height:29px;box-sizing:border-box;border:1px dotted #555"></div>
<div class="h" style="left:528px;top:318px"></div><div class="h" style="left:621px;top:318px"></div><div class="h" style="left:713px;top:318px"></div>
<div class="h" style="left:528px;top:333px"></div><div class="h" style="left:713px;top:333px"></div>
<div class="h" style="left:528px;top:347px"></div><div class="h" style="left:621px;top:347px"></div><div class="h" style="left:713px;top:347px"></div>
<div class="a" style="left:701px;top:315px;width:9px;height:9px;box-sizing:border-box;background:#eee;border:1px solid #666;border-radius:2px"></div><svg style="left:704px;top:317px" width="4" height="5"><path d="M0 0l4 2.500L0 5z" fill="#111"/></svg>
<div class="a" style="left:488px;top:527px;width:125px;height:36px;background:#0078d7"></div>
<span class="t" style="left:539px;top:546px;font-size:14px;color:#000">重置</span>

<!-- properties -->
<div class="a" style="left:1179px;top:121px;width:192px;height:826px;box-sizing:border-box;background:#eeeef2;border:1px solid #ccced8;border-bottom:0"></div>
<span class="t" style="left:1184px;top:134px;font-size:14px;color:#444">属性</span>
<svg style="left:1215px;top:131px" width="117" height="6"><rect width="117" height="6" fill="url(#dots)"/></svg>
<svg style="left:1337px;top:126px" width="12" height="14"><use href="#pin" width="12" height="14"/></svg>
<svg style="left:1355px;top:127px" width="10" height="10"><use href="#x" width="10" height="10"/></svg>
<div class="a" style="left:1180px;top:144px;width:190px;height:25px;box-sizing:border-box;background:#fff;border:1px solid #888"></div>
<span class="t" style="left:1184px;top:156px;font-size:13px;font-weight:bold;color:#111">邮箱输入框</span>
<span class="t" style="left:1263px;top:156px;font-size:14px;color:#333;width:86px;overflow:hidden">System.Windows</span>
<svg style="left:1356px;top:153px" width="10" height="7"><path d="M1 1l4 4 4-4" fill="none" stroke="#555" stroke-width="1.200"/></svg>
<div class="a" style="left:1181px;top:172px;width:23px;height:21px;box-sizing:border-box;background:#c4e0f7;border:1px solid #7cb7e8"></div>
<svg style="left:1184px;top:175px" width="17" height="15" fill="none" stroke="#333"><path d="M.5.500h5v5h-5zM.5 8.500h5v5h-5z" fill="#fff"/><path d="M1.500 3h3M3 1.500v3M1.500 11h3M3 9.500v3"/><path d="M8 2h8M8 5h8M8 9h8M8 12h8" stroke="#6a7a8a"/></svg>
<svg style="left:1207px;top:173px" width="17" height="20"><text x="0" y="9" font-size="9.500" font-weight="bold" font-family="Liberation Sans" fill="#2a5ac0">A</text><text x="0" y="19" font-size="9.500" font-weight="bold" font-family="Liberation Sans" fill="#b03030">Z</text><path d="M12.500 1v16M10 14l2.500 4 2.500-4" fill="none" stroke="#111" stroke-width="1.300"/></svg>
<div class="a" style="left:1229px;top:173px;width:1px;height:20px;background:#aaa"></div>
<div class="a" style="left:1233px;top:172px;width:23px;height:21px;box-sizing:border-box;background:#c4e0f7;border:1px solid #7cb7e8"></div>
<svg style="left:1239px;top:176px" width="11" height="13"><rect x=".5" y=".5" width="10" height="12" fill="#fff" stroke="#445"/><path d="M2 3h7M2 5.500h7M2 8h7M2 10.500h7" stroke="#445"/></svg>
<svg style="left:1262px;top:176px" width="9" height="13" viewBox="0 0 10 17"><path d="M6 0L0 9h4l-2 8 8-10H5l3-7z" fill="#e8c060" stroke="#d07a40" stroke-width=".6"/></svg>
<div class="a" style="left:1281px;top:173px;width:1px;height:20px;background:#aaa"></div>
<svg style="left:1288px;top:174px" width="16" height="16"><rect x=".5" y=".5" width="15" height="15" fill="#e0e0e0" stroke="#bbb"/><path d="M3 5h4l1 1h5v7H3z" fill="#eee" stroke="#bbb"/></svg>

<div class="a" style="left:1180px;top:196px;width:191px;height:700px;box-sizing:border-box;background:#f5f7fb;border:1px solid #a8a8a8"></div>
<div class="a" style="left:1352px;top:197px;width:18px;height:698px;background:#f0f0f0"></div>
<div class="a" style="left:1352px;top:240px;width:18px;height:396px;background:#c8c8c8"></div>
<svg style="left:1356px;top:204px" width="9" height="6"><path d="M1 5l3.500-3.500L8 5" fill="none" stroke="#555" stroke-width="1.500"/></svg>
<svg style="left:1356px;top:883px" width="9" height="6"><path d="M1 1l3.500 3.500L8 1" fill="none" stroke="#555" stroke-width="1.500"/></svg>

<div class="r" style="top:199px"><span class="n">Dock</span><span class="v">None</span></div>
<div class="r" style="top:220px"><span class="n">Location</span><span class="v k">45, 118</span></div>
<div class="r" style="top:241px"><span class="n">Margin</span><span class="v">3, 3, 3, 3</span></div>
<div class="r" style="top:262px"><span class="n">MaximumSize</span><span class="v">0, 0</span></div>
<div class="r" style="top:283px"><span class="n">MinimumSize</span><span class="v">0, 0</span></div>
<div class="r" style="top:304px"><span class="n">Size</span><span class="v k">182, 26</span></div>
<div class="sc" style="top:325px">焦点</div>
<div class="r" style="top:346px"><span class="n">CausesValidation</span><span class="v">True</span></div>
<div class="sc" style="top:367px">可访问性</div>
<div class="r" style="top:388px"><span class="n">AccessibleD</span><span class="v"></span></div>
<div class="r" style="top:409px"><span class="n">AccessibleN</span><span class="v"></span></div>
<div class="r" style="top:430px"><span class="n">AccessibleR</span><span class="v">Default</span></div>
<div class="sc" style="top:451px">设计</div>
<div class="r" style="top:472px"><span class="n">(Name)</span><span class="v k">邮箱输入框</span></div>
<div class="r" style="top:493px"><span class="n">Locked</span><span class="v">False</span></div>
<div class="sc" style="top:514px">数据</div>
<div class="r" style="top:535px"><span class="n">(DataBindings)</span><span class="v"></span></div>
<div class="r" style="top:556px"><span class="n">Tag</span><span class="v"></span></div>
<div class="sc" style="top:577px">外观</div>
<div class="r" style="top:598px"><span class="n">BackColor</span><span class="v" style="padding-left:29px">Window</span></div>
<div class="a" style="left:1267px;top:598px;width:20px;height:18px;box-sizing:border-box;background:#fff;border:1px solid #000"></div>
<div class="r" style="top:619px"><span class="n">BorderStyle</span><span class="v">Fixed3D</span></div>
<div class="r" style="top:640px"><span class="n">Cursor</span><span class="v">IBeam</span></div>
<div class="r" style="top:661px"><span class="n">Font</span><span class="v k">微软雅黑, 9pt</span></div>
<div class="r" style="top:682px"><span class="n">ForeColor</span><span class="v" style="padding-left:29px">WindowText</span></div>
<div class="a" style="left:1267px;top:682px;width:20px;height:19px;background:#000"></div>
<div class="r" style="top:703px"><span class="n">Lines</span><span class="v k">String[] Array</span></div>
<div class="r" style="top:724px"><span class="n">RightToLeft</span><span class="v">No</span></div>
<div class="r" style="top:745px"><span class="n">ScrollBars</span><span class="v">None</span></div>
<div class="r" style="top:766px"><span class="n" style="background:#f3f6fb;left:0;padding-left:5px;height:20px">Text</span><span class="v"></span></div>
<div class="r" style="top:787px"><span class="n">TextAlign</span><span class="v">Left</span></div>
<div class="r" style="top:808px"><span class="n">UseWaitCursor</span><span class="v">False</span></div>
<div class="sc" style="top:829px">行为</div>
<div class="r" style="top:850px"><span class="n">AcceptsReturn</span><span class="v">False</span></div>
<div class="r" style="top:871px"><span class="n">AcceptsTab</span><span class="v">False</span></div>
<div class="r" style="top:892px;height:3px;border:0"></div>

<svg class="ch" style="top:226px" viewBox="0 0 12 12"><path d="M4 2l4 4-4 4" fill="none" stroke="#aaa" stroke-width="1.500"/></svg>
<svg class="ch" style="top:247px" viewBox="0 0 12 12"><path d="M4 2l4 4-4 4" fill="none" stroke="#aaa" stroke-width="1.500"/></svg>
<svg class="ch" style="top:268px" viewBox="0 0 12 12"><path d="M4 2l4 4-4 4" fill="none" stroke="#aaa" stroke-width="1.500"/></svg>
<svg class="ch" style="top:289px" viewBox="0 0 12 12"><path d="M4 2l4 4-4 4" fill="none" stroke="#aaa" stroke-width="1.500"/></svg>
<svg class="ch" style="top:310px" viewBox="0 0 12 12"><path d="M4 2l4 4-4 4" fill="none" stroke="#aaa" stroke-width="1.500"/></svg>
<svg class="ch" style="top:541px" viewBox="0 0 12 12"><path d="M4 2l4 4-4 4" fill="none" stroke="#aaa" stroke-width="1.500"/></svg>
<svg class="ch" style="top:667px" viewBox="0 0 12 12"><path d="M4 2l4 4-4 4" fill="none" stroke="#aaa" stroke-width="1.500"/></svg>
<svg class="ch" style="top:709px" viewBox="0 0 12 12"><path d="M4 2l4 4-4 4" fill="none" stroke="#aaa" stroke-width="1.500"/></svg>
<svg class="ch" style="top:331px" viewBox="0 0 12 12"><path d="M2 4l4 4 4-4" fill="none" stroke="#555" stroke-width="1.700"/></svg>
<svg class="ch" style="top:373px" viewBox="0 0 12 12"><path d="M2 4l4 4 4-4" fill="none" stroke="#555" stroke-width="1.700"/></svg>
<svg class="ch" style="top:457px" viewBox="0 0 12 12"><path d="M2 4l4 4 4-4" fill="none" stroke="#555" stroke-width="1.700"/></svg>
<svg class="ch" style="top:520px" viewBox="0 0 12 12"><path d="M2 4l4 4 4-4" fill="none" stroke="#555" stroke-width="1.700"/></svg>
<svg class="ch" style="top:583px" viewBox="0 0 12 12"><path d="M2 4l4 4 4-4" fill="none" stroke="#555" stroke-width="1.700"/></svg>
<svg class="ch" style="top:835px" viewBox="0 0 12 12"><path d="M2 4l4 4 4-4" fill="none" stroke="#555" stroke-width="1.700"/></svg>

<div class="a" style="left:1180px;top:899px;width:191px;height:48px;box-sizing:border-box;background:#eee;border:1px solid #a8a8a8;border-bottom:0"></div>
<span class="t" style="left:1186px;top:913px;font-size:15px;font-weight:bold;color:#111">Text</span>
<span class="t" style="left:1186px;top:933px;font-size:14px;color:#222">与控件关联的文本。</span>

<!-- nav panel -->
<div class="a" style="left:1378px;top:121px;width:194px;height:826px;box-sizing:border-box;background:#eeeef2;border:1px solid #ccced8;border-bottom:0"></div>
<span class="t" style="left:1384px;top:134px;font-size:14px;color:#444">控件导航</span>
<svg style="left:1444px;top:131px" width="85" height="6"><rect width="85" height="6" fill="url(#dots)"/></svg>
<svg style="left:1537px;top:126px" width="12" height="14"><use href="#pin" width="12" height="14"/></svg>
<svg style="left:1555px;top:127px" width="10" height="10"><use href="#x" width="10" height="10"/></svg>
<div class="a" style="left:1382px;top:147px;width:116px;height:29px;box-sizing:border-box;background:#fff;border:1px solid #808080"></div>
<div class="a" style="left:1505px;top:148px;width:62px;height:27px;box-sizing:border-box;background:#e1e1e1;border:1px solid #adadad;line-height:26px;text-align:center;font-size:14px;color:#111">全部</div>
<div class="a" style="left:1379px;top:179px;width:192px;height:768px;box-sizing:border-box;background:#fff;border:1px solid #808080;border-bottom:0"></div>
<svg style="left:1400px;top:196px" width="60" height="130" fill="none" stroke="#888" stroke-dasharray="1 1"><path d="M7.500 4v10M22.500 26v10M22.500 45v13M38 70v58M38 84h7M38 106h7M38 128h7"/></svg>
<svg style="left:1388px;top:188px" width="9" height="9"><use href="#exm" width="9" height="9"/></svg>
<svg style="left:1400px;top:184px" width="16" height="16"><use href="#folder" width="16" height="16"/></svg>
<span class="t nt" style="left:1422px;top:191px">CustomForm</span>
<svg style="left:1403px;top:210px" width="9" height="9"><use href="#exm" width="9" height="9"/></svg>
<svg style="left:1415px;top:206px" width="16" height="16"><use href="#folder" width="16" height="16"/></svg>
<span class="t" style="left:1437px;top:213px;font-size:14px;color:#222">主框架</span>
<svg style="left:1418px;top:232px" width="9" height="9"><use href="#exp" width="9" height="9"/></svg>
<svg style="left:1430px;top:228px" width="16" height="16" viewBox="0 0 16 16"><path d="M0 2h6l2 2h8v12H0z" fill="#333"/></svg>
<span class="t" style="left:1451px;top:235px;font-size:14px;color:#222">表单框架</span>
<svg style="left:1418px;top:254px" width="9" height="9"><use href="#exm" width="9" height="9"/></svg>
<svg style="left:1430px;top:250px" width="16" height="16"><use href="#folder" width="16" height="16"/></svg>
<span class="t" style="left:1451px;top:257px;font-size:14px;color:#222">按钮框架</span>
<svg style="left:1445px;top:272px" width="16" height="16"><use href="#ctl" width="16" height="16"/></svg>
<span class="t" style="left:1467px;top:279px;font-size:14px;color:#222">重置按钮</span>
<svg style="left:1445px;top:294px" width="16" height="16"><use href="#ctl" width="16" height="16"/></svg>
<span class="t" style="left:1467px;top:301px;font-size:14px;color:#222">取消按钮</span>
<svg style="left:1445px;top:316px" width="16" height="16"><use href="#ctl" width="16" height="16"/></svg>
<div class="a" style="left:1463px;top:314px;width:65px;height:21px;box-sizing:border-box;background:#0078d7;border:1px dotted #222"></div>
<span class="t" style="left:1467px;top:323px;font-size:14px;color:#111">保存按钮</span>

<!-- status strip -->
<div class="a" style="left:264px;top:947px;width:1314px;height:25px;box-sizing:border-box;background:#eee;border-top:1px solid #d0d0d4"></div>
<span class="t" style="left:269px;top:961px;font-size:14.450px;color:#111">已在2025-12-31 21:56:47保存为XML 文件路径: d:\pycode\cap_直播\2025年12月\code880_py880窗体设计器测试\src\录入窗体\录入窗体.xml</span>
<svg style="left:1565px;top:959px" width="12" height="12"><path d="M9 1h2v2H9zM5 5h2v2H5zM9 5h2v2H9zM1 9h2v2H1zM5 9h2v2H5zM9 9h2v2H9z" fill="#aaa"/></svg>

<!-- DIALOG -->
<div class="a" style="left:606px;top:427px;width:574px;height:439px;background:#212121;box-shadow:0 2px 12px rgba(0,0,0,.45);outline:1px solid #bbb"></div>
<div class="a" style="left:606px;top:427px;width:574px;height:34px;background:#fff"></div>
<svg style="left:615px;top:434px" width="18" height="18" viewBox="0 0 18 18"><rect x=".5" y=".5" width="17" height="17" rx="2" fill="#fff" stroke="#ccc"/><circle cx="4" cy="4" r="2" fill="#2b7de0"/><circle cx="9" cy="4" r="2" fill="#333"/><circle cx="14" cy="4" r="2" fill="#2faa30"/><circle cx="9" cy="9" r="2.200" fill="#8e44ad"/><circle cx="9" cy="14" r="2.200" fill="#f07020"/><circle cx="14" cy="14" r="2.200" fill="#e81840"/></svg>
<span class="t" style="left:638px;top:444px;font-size:14px;color:#9a9a9a">信息录入窗体</span>
<div class="a" style="left:1046px;top:443px;width:10px;height:1px;background:#888"></div>
<div class="a" style="left:1097px;top:439px;width:10px;height:10px;box-sizing:border-box;border:1px solid #888"></div>
<svg style="left:1149px;top:439px" width="10" height="10"><path d="M.5.500l9 9M9.500.500l-9 9" stroke="#888"/></svg>
<div class="di" style="left:671px;top:491px;width:182px;height:26px"></div>
<div class="di" style="left:965px;top:491px;width:177px;height:26px"></div>
<div class="di" style="left:671px;top:545px;width:182px;height:26px"></div>
<div class="di" style="left:965px;top:546px;width:177px;height:26px"></div>
<div class="di" style="left:671px;top:599px;width:182px;height:26px"></div>
<div class="di" style="left:966px;top:601px;width:177px;height:26px"></div>
<div class="di" style="left:671px;top:653px;width:471px;height:26px"></div>
<div class="di" style="left:671px;top:700px;width:471px;height:63px"></div>
<span class="t dl" style="left:633px;top:509px">姓名:</span><span class="t dl" style="left:633px;top:563px">电话:</span><span class="t dl" style="left:633px;top:617px">邮箱:</span><span class="t dl" style="left:633px;top:671px">部门:</span><span class="t dl" style="left:633px;top:716px">备注:</span>
<span class="t dl" style="left:899px;top:509px">职位:</span><span class="t dl" style="left:899px;top:563px">工号:</span><span class="t dl" style="left:899px;top:617px">入职日期:</span>
<div class="db" style="left:626px;top:805px;background:#365a7e">重置</div>
<div class="db" style="left:828px;top:803px;background:#3498db">保存</div>
<div class="db" style="left:1031px;top:806px;background:#e74c3c">取消</div>
</body></html>
